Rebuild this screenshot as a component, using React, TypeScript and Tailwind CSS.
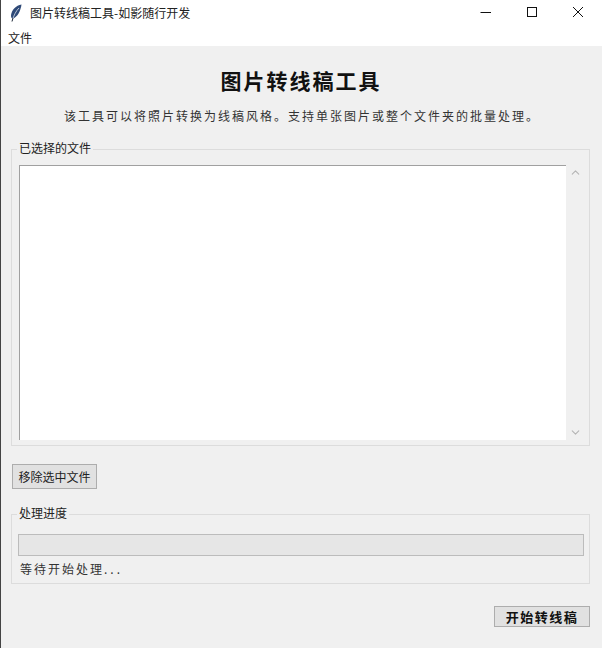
import { ChevronDown, ChevronUp } from "lucide-react";

const cjk = "font-['Noto_Sans_CJK_SC','Liberation_Sans',sans-serif]";

function Feather() {
  return (
    <svg width="12" height="18" viewBox="0 0 12 18">
      <path d="M11.500 .5C6 1.500 1.500 6 1 11.500c0 2 .5 3 2 3C7.500 13 10.500 7 11.500 .5z" fill="#2f4a78" />
      <path d="M9 4C6 7 4 11 2 17" stroke="#dfe6f0" strokeWidth="0.8" fill="none" />
      <path d="M3 14L2 17.500" stroke="#1f2937" strokeWidth="1" fill="none" />
    </svg>
  );
}

function TitleBar() {
  return (
    <div className="flex h-[26px] items-center bg-white">
      <div className="ml-[9px] flex w-[12px] justify-center">
        <Feather />
      </div>
      <span className="mb-[1px] ml-[8px] text-[12px] leading-none text-[#222]">图片转线稿工具-如影随行开发</span>
      <div className="ml-auto mr-[1px] flex items-center">
        <svg width="46" height="26" viewBox="0 0 46 26">
          <path d="M17.500 12.500H28" stroke="#111" strokeWidth="1" />
        </svg>
        <svg width="46" height="26" viewBox="0 0 46 26">
          <rect x="18.500" y="7.500" width="9" height="9" fill="none" stroke="#111" strokeWidth="1" />
        </svg>
        <svg width="46" height="26" viewBox="0 0 46 26">
          <path d="M18 7l10 10M28 7L18 17" stroke="#111" strokeWidth="1" />
        </svg>
      </div>
    </div>
  );
}

function GroupLabel({ children }: { children: string }) {
  return (
    <span className="absolute left-[5px] top-[-10px] bg-[#f0f0f0] px-[2px] text-[12px] leading-[16px] text-[#222]">
      {children}
    </span>
  );
}

export default function App() {
  return (
    <div className={`flex h-[648px] w-[602px] flex-col overflow-hidden border-l border-[#444] bg-[#f0f0f0] ${cjk}`}>
      <TitleBar />
      <div className="flex h-[20px] items-center bg-white pl-[7px] pt-[3px] text-[12px] leading-none text-[#222]">文件</div>

      <h1 className="mt-[22px] pr-[1px] text-center text-[21px] font-bold leading-[24px] tracking-[2px] text-[#111]">
        图片转线稿工具
      </h1>
      <p className="mt-[16px] pl-[1px] text-center text-[12px] leading-[16px] tracking-[2px] text-[#333]">
        该工具可以将照片转换为线稿风格。支持单张图片或整个文件夹的批量处理。
      </p>

      <div className="relative ml-[10px] mt-[25px] h-[297px] w-[579px] border border-[#dcdcdc] pl-[7px] pt-[15px]">
        <GroupLabel>已选择的文件</GroupLabel>
        <div className="flex h-[275px]">
          <div className="w-[547px] border-l border-t border-[#a0a0a0] bg-white" />
          <div className="ml-[1px] flex w-[17px] flex-col items-center justify-between py-[1px] text-[#b4b4b4]">
            <ChevronUp size={13} strokeWidth={2} />
            <ChevronDown size={13} strokeWidth={2} />
          </div>
        </div>
      </div>

      <button className="ml-[11px] mt-[18px] h-[25px] w-[85px] border border-[#adadad] bg-[#e1e1e1] text-[12px] leading-none text-[#222]">
        移除选中文件
      </button>

      <div className="relative ml-[10px] mt-[25px] h-[70px] w-[579px] border border-[#dcdcdc] pl-[6px] pt-[19px]">
        <GroupLabel>处理进度</GroupLabel>
        <div className="h-[22px] w-[566px] border border-[#bcbcbc] bg-[#e6e6e6]" />
        <p className="ml-[2px] mt-[5px] text-[12px] leading-[16px] tracking-[2px] text-[#333]">
          等待开始处理<span className="tracking-[3px]">...</span>
        </p>
      </div>

      <button className="ml-[493px] mt-[22px] h-[21px] w-[96px] border border-[#adadad] bg-[#e1e1e1] text-[13px] font-bold leading-none tracking-[1.500px] text-[#111]">
        开始转线稿
      </button>
    </div>
  );
}
